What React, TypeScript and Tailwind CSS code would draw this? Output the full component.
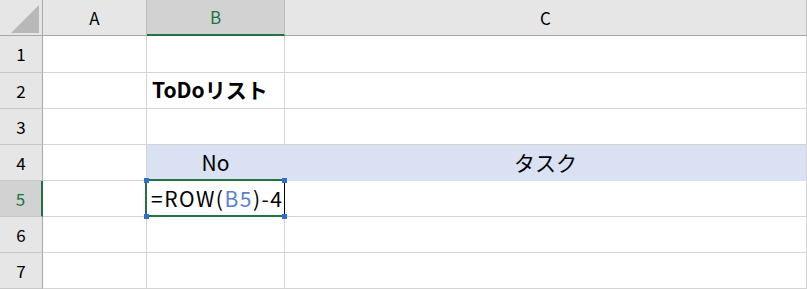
import React from "react";

const cols = ["A", "B", "C"];

function RowHead({ n, active }: { n: number; active?: boolean }) {
  return (
    <div
      className={`flex items-center justify-center border-b border-b-[#c8c8c8] text-[17px] ${
        active
          ? "bg-[#d2d2d2] text-[#217346] border-r-2 border-r-[#217346]"
          : "bg-[#e6e6e6] text-black border-r border-r-[#a8a8a8]"
      }`}
    >
      {n}
    </div>
  );
}

function Cell({
  children,
  className = "",
}: {
  children?: React.ReactNode;
  className?: string;
}) {
  return (
    <div
      className={`flex items-center border-r border-b border-[#d4d4d4] text-[21px] text-black ${className}`}
    >
      {children}
    </div>
  );
}

export default function App() {
  return (
    <div className="relative h-[289px] w-[807px] overflow-hidden bg-white font-['Noto_Sans_CJK_JP','Noto_Sans',sans-serif]">
      <div className="grid grid-cols-[43px_104px_138px_522px] grid-rows-[36px_37px_36px_36px_36px_36px_36px_36px]">
        {/* Header */}
        <div className="relative border-r border-b border-[#a8a8a8] bg-[#e6e6e6]">
          <svg className="absolute left-[11px] top-[5px]" width="28" height="28" viewBox="0 0 28 28">
            <polygon points="28,0 28,28 0,28" fill="#b8b8b8" />
          </svg>
        </div>
        {cols.map((c) => (
          <div
            key={c}
            className={`flex items-center justify-center text-[17px] ${
              c === "B"
                ? "bg-[#d2d2d2] text-[#217346] border-b-2 border-b-[#217346] border-r border-r-[#bdbdbd]"
                : "bg-[#e6e6e6] text-black border-b border-b-[#a8a8a8] border-r border-r-[#bdbdbd]"
            }`}
          >
            {c}
          </div>
        ))}

        {/* Row 1 */}
        <RowHead n={1} />
        <Cell />
        <Cell />
        <Cell />

        {/* Row 2 */}
        <RowHead n={2} />
        <Cell />
        <Cell className="pl-[5px] pb-[2px] font-bold whitespace-nowrap">ToDoリスト</Cell>
        <Cell />

        {/* Row 3 */}
        <RowHead n={3} />
        <Cell />
        <Cell />
        <Cell />

        {/* Row 4 */}
        <RowHead n={4} />
        <Cell />
        <Cell className="justify-center bg-[#d9e1f2] border-[#d9e1f2]">No</Cell>
        <Cell className="justify-center bg-[#d9e1f2] border-[#d9e1f2] border-r-[#d4d4d4]">タスク</Cell>

        {/* Row 5 */}
        <RowHead n={5} active />
        <Cell />
        <Cell className="pl-[4px] whitespace-nowrap tracking-[1.5px]">
          =ROW(<span className="text-[#5b7fd6]">B5</span>)-4
        </Cell>
        <Cell />

        {/* Row 6 */}
        <RowHead n={6} />
        <Cell />
        <Cell />
        <Cell />

        {/* Row 7 */}
        <RowHead n={7} />
        <Cell />
        <Cell />
        <Cell />
      </div>

      {/* Selection on B5 */}
      <div className="absolute left-[145px] top-[179px] h-[38px] w-[139px] border-y-2 border-l-2 border-[#217346]" />
      <div className="absolute left-[284px] top-[180px] h-[36px] w-px bg-black" />
      <div className="absolute left-[144px] top-[178px] h-[5px] w-[5px] bg-[#2f6fd0]" />
      <div className="absolute left-[144px] top-[214px] h-[5px] w-[5px] bg-[#2f6fd0]" />
      <div className="absolute left-[282px] top-[178px] h-[5px] w-[5px] bg-[#2f6fd0]" />
      <div className="absolute left-[282px] top-[214px] h-[5px] w-[5px] bg-[#2f6fd0]" />
    </div>
  );
}
